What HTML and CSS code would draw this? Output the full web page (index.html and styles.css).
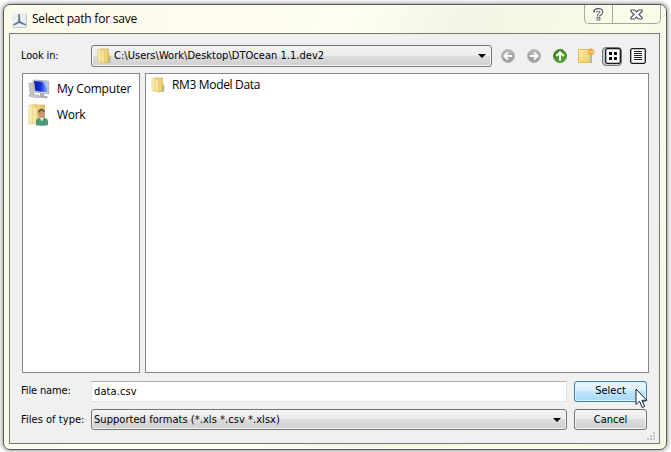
FILE: index.html
```html
<!DOCTYPE html>
<html lang="en">
<head>
<meta charset="utf-8">
<title>Select path for save</title>
<link rel="stylesheet" href="styles.css">
</head>
<body>
<svg width="0" height="0" class="defs">
  <defs>
    <linearGradient id="gold" x1="0" x2="1"><stop offset="0" stop-color="#f9e99d"/><stop offset="1" stop-color="#dfb94f"/></linearGradient>
    <linearGradient id="pale" x1="0" x2="1"><stop offset="0" stop-color="#fff6c8"/><stop offset="1" stop-color="#edcf6c"/></linearGradient>
    <linearGradient id="note" x1="0" x2="1" y1="0" y2="1"><stop offset="0" stop-color="#fff0a6"/><stop offset="1" stop-color="#ecc95e"/></linearGradient>
    <linearGradient id="screen" x1="0" x2="1"><stop offset="0" stop-color="#0717a8"/><stop offset=".5" stop-color="#1735d8"/><stop offset="1" stop-color="#88b4fa"/></linearGradient>
    <linearGradient id="grey" x1="0" x2="0" y1="0" y2="1"><stop offset="0" stop-color="#b9b9b9"/><stop offset="1" stop-color="#989898"/></linearGradient>
    <linearGradient id="green" x1="0" x2="1" y1="0" y2="1"><stop offset="0" stop-color="#2f7a20"/><stop offset="1" stop-color="#62b52c"/></linearGradient>
    <symbol id="folder" viewBox="0 0 14 16">
      <path d="M1 1.500 6 .5v14l-5-1z" fill="url(#pale)" stroke="#dcc16c" stroke-width=".6"/>
      <path d="M6 1h5.500v6L13 8v6.500H6z" fill="url(#gold)" stroke="#d1ad4c" stroke-width=".6"/>
      <path d="M4.500 2 8 3v12.500l-3.500-1.500z" fill="url(#pale)" stroke="#dcbc5d" stroke-width=".5"/>
      <path d="M12 10v4" stroke="#62b7dc"/>
    </symbol>
  </defs>
</svg>
<div class="window">
  <header class="titlebar">
    <svg class="app-icon" width="15" height="15" viewBox="0 0 15 15"><path d="M0 0h15v15H0z" fill="#e9eef4"/><path d="M.5 14.500h14V0" fill="none" stroke="#c3c9d0"/><path d="M6.300 1h1.500l.6 7.300 5.600 3-.6 1.200L7.200 10 1.500 12.800 1 11.600l5.200-3.300z" fill="#64798f"/></svg>
    <h1>Select path for save</h1>
    <div class="caption">
      <span class="help"><svg width="11" height="13" viewBox="0 0 11 13"><path d="M2 4.300V3.300C3.500 1 8.500 1.300 8.500 4c0 2-3 2-3 4.300M5.500 9v3.500" fill="none" stroke="#545666" stroke-width="3.600"/><path d="M2.200 3.600C3.500 1.300 8.400 1.500 8.400 4c0 2-2.900 2-2.900 3.700M5.500 9.800v2" fill="none" stroke="#fff" stroke-width="1.700"/></svg></span>
      <span class="close"><svg width="13" height="11" viewBox="0 0 13 11"><path d="M1 1h3.600l1.900 2 1.900-2H12v1.500L9 5.500l3 3V10H8.400L6.500 8 4.600 10H1V8.500l3-3-3-3z" fill="#fff" stroke="#545666" stroke-width="1.200"/></svg></span>
    </div>
  </header>
  <main class="client">
    <div class="row look">
      <label>Look in:</label>
      <div class="combo path"><svg class="fold" width="14" height="16"><use href="#folder"/></svg><span class="path-text">C:\Users\Work\Desktop\DTOcean 1.1.dev2</span><i class="arrow"></i></div>
      <div class="tools">
        <svg width="14" height="14" viewBox="0 0 14 14"><circle cx="7" cy="7" r="6.500" fill="url(#grey)" stroke="#aaa" stroke-width=".7"/><path d="M11 7H3.500M7 3.300 3.300 7 7 10.700" fill="none" stroke="#fff" stroke-width="1.900"/></svg>
        <svg width="14" height="14" viewBox="0 0 14 14"><circle cx="7" cy="7" r="6.500" fill="url(#grey)" stroke="#aaa" stroke-width=".7"/><path d="M3 7h7.500M7 3.300 10.700 7 7 10.700" fill="none" stroke="#fff" stroke-width="1.900"/></svg>
        <svg width="14" height="14" viewBox="0 0 14 14"><circle cx="7" cy="7" r="6.500" fill="url(#green)" stroke="#397d27" stroke-width=".8"/><path d="M7 11.500V3.500M3.300 7 7 3.300 10.700 7" fill="none" stroke="#fff" stroke-width="2"/></svg>
        <svg class="new" width="17" height="16" viewBox="0 0 17 16"><path d="M.5 1.500h13v13H.5z" fill="url(#note)" stroke="#dfc063"/><path d="M13 8v6.500" stroke="#71bce2" stroke-width="1.300"/><path d="M13 0v8M9 4h8M10.200 1.200l5.600 5.600M15.800 1.200l-5.600 5.600" stroke="#eba12a" stroke-width="1.200"/><circle cx="13" cy="4" r="1.300" fill="#ffd873"/></svg>
        <span class="view on"><svg width="16" height="16" viewBox="0 0 16 16"><rect x=".7" y=".7" width="14.600" height="14.600" rx="1.500" fill="#fff" stroke="#101820" stroke-width="1.300"/><path d="M4 4h3v3H4zM9 4h3v3H9zM4 9h3v3H4zM9 9h3v3H9z" fill="#050505"/></svg></span>
        <span class="view"><svg width="16" height="16" viewBox="0 0 16 16"><rect x=".7" y=".7" width="14.600" height="14.600" rx="1.500" fill="#fff" stroke="#101820" stroke-width="1.300"/><path d="M4 3.500h8M4 5.500h8M4 7.500h8M4 9.500h8M4 11.500h8" stroke="#222"/></svg></span>
      </div>
    </div>
    <div class="panes">
      <ul class="pane places">
        <li><svg width="22" height="20" viewBox="0 0 22 20"><path d="M1 4h5v11l-4-1z" fill="#c5c9cd" stroke="#9b9fa4" stroke-width=".6"/><path d="M5 1 20.700 2v13L7 13z" fill="#dfe3e9" stroke="#969ca5" stroke-width=".7"/><path d="m6 2 13.700 1v10.500L7.500 12z" fill="url(#screen)"/><path d="m14.500 3 5 .2v7z" fill="#c0dcff" opacity=".65"/><path d="m12 14 4 .5v2l4 1-1 2-9-1 2-2z" fill="#a9aeb4"/><path d="m2 15 9 1.500-1 2.500-9-2z" fill="#c6cacf" stroke="#8d9298" stroke-width=".5"/></svg><span class="t-computer">My Computer</span></li>
        <li><svg width="22" height="24" viewBox="0 0 22 24"><path d="M1 2.500 8 1v19l-7 1z" fill="url(#pale)" stroke="#dbbf68" stroke-width=".6"/><path d="M8 2h8.500v18H8z" fill="url(#gold)" stroke="#d1ad4c" stroke-width=".6"/><path d="m5 3 5 2v17.500l-5-2z" fill="url(#pale)" stroke="#dbbf68" stroke-width=".5"/><path d="M8 22v-3.500c0-3 3-4 6-4s6 1 6 4V22c-3 1-9 1-12 0z" fill="#4e9878"/><path d="m11.500 14.500 2.500 4 2-4z" fill="#edf3ec"/><ellipse cx="13.500" cy="10.700" rx="3.300" ry="4.300" fill="#c59870"/><path d="M10 10c-.5-6 7-6 7-.5-2-.5-3-1.500-3.500-2-1 1-2 2-3.500 2.500z" fill="#796047"/></svg><span class="t-work">Work</span></li>
      </ul>
      <ul class="pane files">
        <li><svg width="14" height="16"><use href="#folder"/></svg><span class="t-model">RM3 Model Data</span></li>
      </ul>
    </div>
    <div class="row name">
      <label class="l-name">File name:</label>
      <div class="input"><span class="t-data">data.csv</span></div>
      <div class="button primary"><span>Select</span></div>
    </div>
    <div class="row type">
      <label class="l-type">Files of type:</label>
      <div class="combo"><span class="t-formats">Supported formats (*.xls *.csv *.xlsx)</span><i class="arrow"></i></div>
      <div class="button"><span>Cancel</span></div>
    </div>
    <svg class="grip" width="9" height="9" viewBox="0 0 9 9"><path d="M6 0h2v2H6zM3 3h2v2H3zM6 3h2v2H6zM0 6h2v2H0zM3 6h2v2H3zM6 6h2v2H6z" fill="#c0c0c0"/></svg>
  </main>
</div>
<svg class="pointer" width="13" height="21" viewBox="0 0 13 21"><path d="M1 1v15.500l3.500-3.300 2.700 6.300 2.500-1.100-2.700-6.100h4.800z" fill="#fff" stroke="#1b2130"/></svg>
</body>
</html>
```

FILE: styles.css
```css
* { box-sizing: border-box; }
body {
  margin: 0;
  width: 671px;
  height: 452px;
  padding: 4px 4px 2px 3px;
  overflow: hidden;
  background: #fff;
  font: 11px/14px "DejaVu Sans Condensed", "DejaVu Sans", sans-serif;
  color: #000;
}
.defs { position: absolute; }
svg { display: block; flex: none; }
.window {
  height: 446px;
  border: 1px solid #565650;
  border-radius: 7px;
  padding: 0 6px;
  background: linear-gradient(105deg, #fbfae9 0, #fffff0 45%, #f4f4e4 60%, #fbfbe9 80%, #f5f6e6 100%);
  box-shadow: inset 0 0 0 1px #fffff4, 0 0 4px 1px #999;
}
.titlebar { display: flex; height: 28px; }
.app-icon { margin: 8px 0 0 2px; }
h1 {
  margin: 5px 0 0 5px;
  font: 12px/17px "Open Sans", sans-serif;
  letter-spacing: -.22px;
  white-space: nowrap;
}
.caption {
  display: flex;
  width: 77px;
  height: 19px;
  margin: 0 -1px 0 auto;
  border: 1px solid #aaa99c;
  border-top: 0;
  border-radius: 0 0 5px 5px;
}
.caption span { display: flex; align-items: center; justify-content: center; }
.help { width: 28px; border-right: 1px solid #aaa99c; }
.close { flex: 1; }
.client {
  position: relative;
  display: flex;
  flex-direction: column;
  width: 651px;
  height: 411px;
  margin-left: -1px;
  border: 1px solid #777873;
  background: #f0f0f0;
  padding: 11px 11px 0 11px;
}
.row { display: flex; align-items: center; white-space: nowrap; }
.row label { flex: none; width: 70px; }
.l-type { letter-spacing: .04px; }
.l-name { letter-spacing: -.13px; }
.look { height: 22px; }
.look label { letter-spacing: -.15px; }
.combo {
  display: flex;
  flex: none;
  align-items: center;
  width: 476px;
  height: 21px;
  padding: 0 5px 0 2px;
  border: 1px solid #747474;
  border-radius: 3px;
  background: linear-gradient(#f3f3f3 0, #ebebeb 48%, #dcdcdc 50%, #cfcfcf 100%);
  box-shadow: inset 0 0 0 1px #f5f5f5;
}
.path { width: 401px; height: 22px; padding-left: 5px; padding-right: 5px; }
.path-text { margin-left: 3px; letter-spacing: .03px; }
.t-formats { letter-spacing: .05px; }
.arrow { margin-left: auto; border: 4px solid transparent; border-top-color: #000; border-bottom: 0; }
.tools { display: flex; flex: none; align-items: center; gap: 12px; margin-left: 9px; }
.new { margin-left: -1px; }
.view { display: flex; align-items: center; justify-content: center; width: 16px; height: 20px; }
.view.on { width: 20px; height: 19px; margin-left: -5px; padding-left: 2px; border: 1px solid #777; border-radius: 4px; background: #c5c9ce; }
.view.on + .view { margin-left: -4px; }
.panes { display: flex; gap: 5px; height: 300px; margin: 6px 0 0 1px; }
.pane {
  flex: none;
  margin: 0;
  padding: 2px 5px;
  list-style: none;
  border: 1px solid #828790;
  background: #fff;
  font: 12px/16px "Open Sans", sans-serif;
}
.places { width: 118px; }
.files { width: 504px; }
.pane li { display: flex; align-items: center; height: 26px; white-space: nowrap; }
.pane.files li { height: 17px; }
.places span { margin-left: 7px; }
.files span { margin-left: 7px; }
.t-computer { letter-spacing: -.2px; }
.t-work { letter-spacing: -.3px; }
.t-model { letter-spacing: -.34px; }
.name { height: 22px; margin-top: 7px; }
.input {
  display: flex;
  flex: none;
  align-items: center;
  width: 476px;
  height: 21px;
  padding: 2px 0 0 2px;
  border: 1px solid #e2e3ea;
  border-top-color: #abadb3;
  background: #fff;
}
.t-data { letter-spacing: .1px; }
.button {
  display: flex;
  flex: none;
  align-items: center;
  justify-content: center;
  width: 73px;
  height: 21px;
  margin-left: 7px;
  border: 1px solid #707070;
  border-radius: 3px;
  background: linear-gradient(#f3f3f3 0, #ebebeb 48%, #dcdcdc 50%, #cfcfcf 100%);
  box-shadow: inset 0 0 0 1px #f5f5f5;
}
.button.primary {
  border-color: #3c7fb1;
  background: linear-gradient(#eaf6fd 0, #d9f0fc 48%, #bee6fd 50%, #a7d9f5 100%);
  box-shadow: inset 0 0 0 1px #def5ff;
}
.type { height: 21px; margin-top: 7px; }
.grip { position: absolute; right: 3px; bottom: 2px; }
.pointer { position: absolute; left: 635px; top: 388px; }
```
